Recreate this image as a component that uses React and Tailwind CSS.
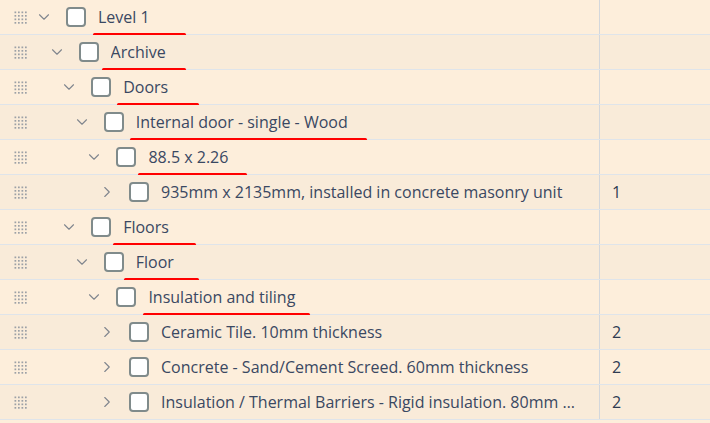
import React from 'react';
import { ChevronDown, ChevronRight } from 'lucide-react';

const rows = [
  { level: 0, name: 'Level 1', open: true, mark: [93, 186] },
  { level: 1, name: 'Archive', open: true, mark: [102, 186] },
  { level: 2, name: 'Doors', open: true, mark: [117, 199] },
  { level: 3, name: 'Internal door - single - Wood', open: true, mark: [130, 367] },
  { level: 4, name: '88.5 x 2.26', open: true, mark: [138, 247] },
  { level: 5, name: '935mm x 2135mm, installed in concrete masonry unit', open: false, qty: '1' },
  { level: 2, name: 'Floors', open: true, mark: [113, 196] },
  { level: 3, name: 'Floor', open: true, mark: [124, 199] },
  { level: 4, name: 'Insulation and tiling', open: true, mark: [143, 310] },
  { level: 5, name: 'Ceramic Tile. 10mm thickness', open: false, qty: '2' },
  { level: 5, name: 'Concrete - Sand/Cement Screed. 60mm thickness', open: false, qty: '2' },
  { level: 5, name: 'Insulation / Thermal Barriers - Rigid insulation. 80mm thickness', open: false, qty: '2' },
];

const DragHandle = () => (
  <svg width="13" height="13" viewBox="0 0 13 13" className="shrink-0 text-[#9ca0a6]">
    {[0, 1, 2, 3].map((r) =>
      [0, 1, 2, 3].map((c) => (
        <rect key={`${r}-${c}`} x={c * 3.5 + 0.5} y={r * 3.5 + 0.5} width="1.7" height="1.7" fill="currentColor" />
      ))
    )}
  </svg>
);

const Row = ({ row, index }) => {
  const bg = index % 2 === 0 ? 'bg-[#fdeedb]' : 'bg-[#f9ebd9]';
  const Chevron = row.open ? ChevronDown : ChevronRight;
  return (
    <div className={`relative flex h-[35px] border-b border-[#dfe4ea] ${bg}`}>
      <div className="flex w-[599px] items-center min-w-0">
        <div className="flex w-[34px] shrink-0 justify-center pl-[7px]">
          <DragHandle />
        </div>
        <div className="flex items-center min-w-0" style={{ paddingLeft: row.level * 12.6 }}>
          <div className="flex h-[20px] w-[20px] shrink-0 items-center justify-center text-[#80868e]">
            <Chevron size={18} strokeWidth={1.5} className="shrink-0" />
          </div>
          <div className="ml-[12px] h-[20px] w-[20px] shrink-0 rounded-[4px] border-2 border-[#808b8b] bg-white" />
          <div className="ml-[12px] truncate pr-[22px] text-[16px] text-[#3a4862]">{row.name}</div>
        </div>
      </div>
      <div className="flex flex-1 items-center border-l border-[#d3d7dc] pl-[12px] text-[16px] text-[#2f3b52]">
        {row.qty}
      </div>
      {row.mark && (
        <div
          className="absolute bottom-[-2px] h-[3px] rounded-full bg-[#ff0000]"
          style={{ left: row.mark[0], width: row.mark[1] - row.mark[0] }}
        />
      )}
    </div>
  );
};

export default function App() {
  return (
    <div className="h-[423px] w-[710px] overflow-hidden bg-[#fdeedb] font-['Open_Sans',sans-serif]">
      {rows.map((row, i) => (
        <Row key={i} row={row} index={i} />
      ))}
    </div>
  );
}
